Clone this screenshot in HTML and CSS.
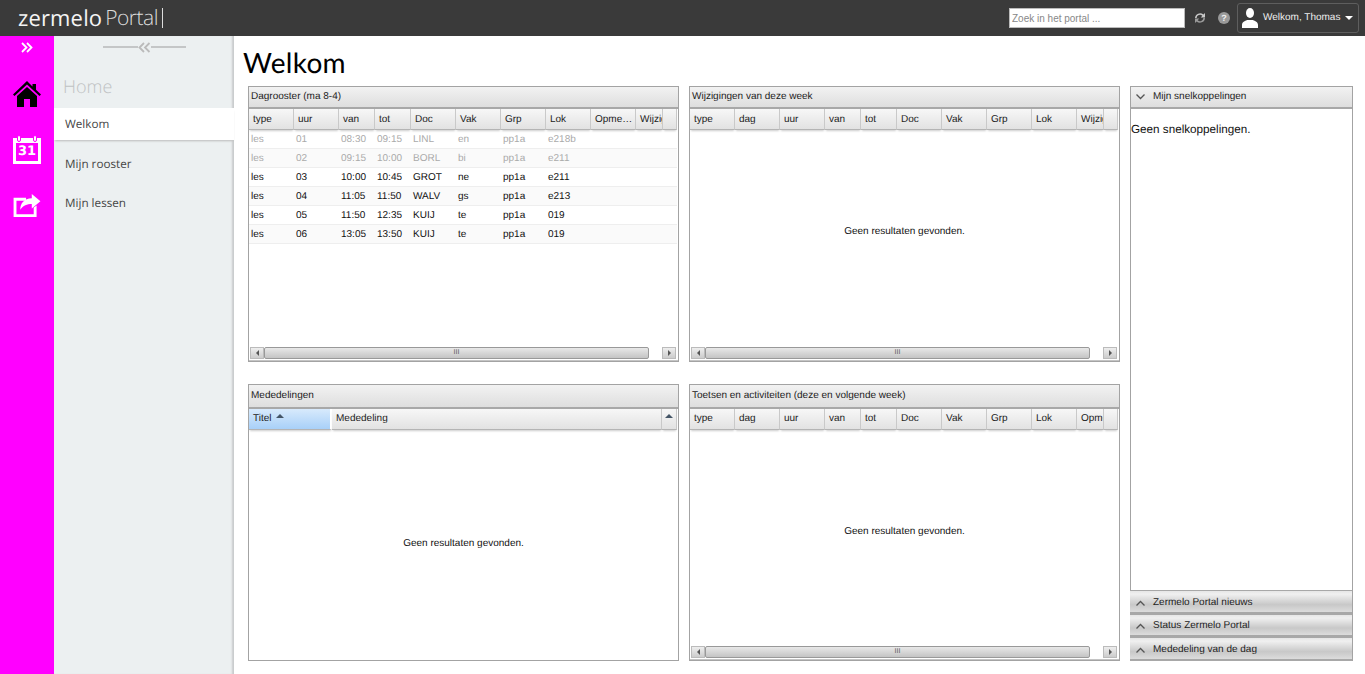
FILE: index.html
```html
<!DOCTYPE html>
<html lang="nl">
<head>
<meta charset="utf-8">
<title>Zermelo Portal</title>
<link rel="stylesheet" href="styles.css">
</head>
<body>
<header class="topbar">
  <div class="logo"><span class="logo-a">zermelo</span><span class="logo-b">Portal</span></div>
  <div class="top-tools">
    <input class="search" type="text" placeholder="Zoek in het portal ...">
    <svg class="refresh" width="14" height="14" viewBox="0 0 14 14"><path d="M2 7a5 5 0 0 1 8.400-3.400L12 2v4.400H7.800l1.500-1.600A3.400 3.400 0 0 0 3.600 7z" fill="#c8c8c8"/><path d="M12 7a5 5 0 0 1-8.400 3.400L2 12V7.600h4.200L4.700 9.200A3.400 3.400 0 0 0 10.400 7z" fill="#9a9a9a"/></svg>
    <span class="help">?</span>
    <div class="user">
      <svg width="16" height="20" viewBox="0 0 16 20"><ellipse cx="8" cy="5" rx="4" ry="5" fill="#fff"/><path d="M0 20v-3c0-3 3-4 5-5h6c2 1 5 2 5 5v3z" fill="#fff"/></svg>
      <span class="user-name">Welkom, Thomas</span>
      <span class="caret"></span>
    </div>
  </div>
</header>
<div class="shell">
  <nav class="rail">
    <svg class="rail-expand" width="12" height="11" viewBox="0 0 12 11"><path d="M1 1l4.500 4.500L1 10M6 1l4.500 4.500L6 10" fill="none" stroke="#fff" stroke-width="1.800"/></svg>
    <svg class="rail-icon" width="28" height="26" viewBox="0 0 28 26"><path d="M14 0L0 13.500l1.500 1.500L14 3.500 26.500 15l1.500-1.500-5-4.700V3h-3.500v2.500z" fill="#000"/><path d="M14 6L4 15v11h7v-8h6v8h7V15z" fill="#000"/></svg>
    <div class="cal">
      <span class="cal-ring cal-ring-l"></span><span class="cal-ring cal-ring-r"></span>
      <span class="cal-num">31</span>
    </div>
    <svg class="rail-icon share" width="28" height="23" viewBox="0 0 28 24"><path d="M0 4h13v3H3v14h18v-7l3-2v12H0z" fill="#fff"/><path d="M19 0l9 7.500-9 7.500v-4.500c-5 0-9 1.500-12 6 0-7 4-11.500 12-12z" fill="#fff"/></svg>
  </nav>
  <aside class="subnav">
    <div class="collapse">
      <span class="collapse-line"></span>
      <svg width="13" height="11" viewBox="0 0 13 11"><path d="M6 1L1.500 5.500 6 10M11.500 1L7 5.500l4.500 4.500" fill="none" stroke="#bbb" stroke-width="1.800"/></svg>
      <span class="collapse-line"></span>
    </div>
    <div class="sub-title">Home</div>
    <a class="sub-item sub-active">Welkom</a>
    <a class="sub-item">Mijn rooster</a>
    <a class="sub-item">Mijn lessen</a>
  </aside>
  <main class="main">
    <h1 class="title">Welkom</h1>
    <div class="board">
      <section class="panel">
        <h2 class="panel-head">Dagrooster (ma 8-4)</h2>
        <div class="grid-body">
          <table class="grid">
            <thead><tr><th class="m">type</th><th class="m">uur</th><th class="s">van</th><th class="s">tot</th><th class="m">Doc</th><th class="m">Vak</th><th class="m">Grp</th><th class="m">Lok</th><th class="m">Opme…</th><th class="c">Wijzig</th><th class="f"></th></tr></thead>
            <tbody>
              <tr class="past"><td>les</td><td>01</td><td>08:30</td><td>09:15</td><td>LINL</td><td>en</td><td>pp1a</td><td>e218b</td><td></td><td></td><td></td></tr>
              <tr class="past"><td>les</td><td>02</td><td>09:15</td><td>10:00</td><td>BORL</td><td>bi</td><td>pp1a</td><td>e211</td><td></td><td></td><td></td></tr>
              <tr><td>les</td><td>03</td><td>10:00</td><td>10:45</td><td>GROT</td><td>ne</td><td>pp1a</td><td>e211</td><td></td><td></td><td></td></tr>
              <tr><td>les</td><td>04</td><td>11:05</td><td>11:50</td><td>WALV</td><td>gs</td><td>pp1a</td><td>e213</td><td></td><td></td><td></td></tr>
              <tr><td>les</td><td>05</td><td>11:50</td><td>12:35</td><td>KUIJ</td><td>te</td><td>pp1a</td><td>019</td><td></td><td></td><td></td></tr>
              <tr><td>les</td><td>06</td><td>13:05</td><td>13:50</td><td>KUIJ</td><td>te</td><td>pp1a</td><td>019</td><td></td><td></td><td></td></tr>
            </tbody>
          </table>
        </div>
        <div class="hscroll"><span class="sb-btn"><i class="arrow-l"></i></span><span class="sb-thumb">III</span><span class="sb-gap"></span><span class="sb-btn"><i class="arrow-r"></i></span></div>
      </section>
      <section class="panel">
        <h2 class="panel-head">Wijzigingen van deze week</h2>
        <table class="grid">
          <thead><tr><th class="m">type</th><th class="m">dag</th><th class="m">uur</th><th class="s">van</th><th class="s">tot</th><th class="m">Doc</th><th class="m">Vak</th><th class="m">Grp</th><th class="m">Lok</th><th class="c">Wijzig</th><th class="f"></th></tr></thead>
        </table>
        <div class="empty empty-scroll">Geen resultaten gevonden.</div>
        <div class="hscroll"><span class="sb-btn"><i class="arrow-l"></i></span><span class="sb-thumb">III</span><span class="sb-gap"></span><span class="sb-btn"><i class="arrow-r"></i></span></div>
      </section>
      <section class="panel accordion">
        <h2 class="panel-head acc-open"><svg class="chev" width="9" height="6" viewBox="0 0 9 6"><path d="M.5.5l4 4 4-4" fill="none" stroke="#555" stroke-width="1.300"/></svg>Mijn snelkoppelingen</h2>
        <div class="acc-body">Geen snelkoppelingen.</div>
        <h2 class="acc-head acc-tall"><svg class="chev" width="9" height="6" viewBox="0 0 9 6"><path d="M.5 5.500l4-4 4 4" fill="none" stroke="#555" stroke-width="1.300"/></svg>Zermelo Portal nieuws</h2>
        <h2 class="acc-head"><svg class="chev" width="9" height="6" viewBox="0 0 9 6"><path d="M.5 5.500l4-4 4 4" fill="none" stroke="#555" stroke-width="1.300"/></svg>Status Zermelo Portal</h2>
        <h2 class="acc-head acc-tall"><svg class="chev" width="9" height="6" viewBox="0 0 9 6"><path d="M.5 5.500l4-4 4 4" fill="none" stroke="#555" stroke-width="1.300"/></svg>Mededeling van de dag</h2>
      </section>
      <section class="panel panel-low">
        <h2 class="panel-head">Mededelingen</h2>
        <table class="grid">
          <thead><tr><th class="titel">Titel <i class="sort"></i></th><th class="wide">Mededeling</th><th class="f f-sort"><i class="sort"></i></th></tr></thead>
        </table>
        <div class="empty empty-plain">Geen resultaten gevonden.</div>
      </section>
      <section class="panel panel-low">
        <h2 class="panel-head">Toetsen en activiteiten (deze en volgende week)</h2>
        <table class="grid">
          <thead><tr><th class="m">type</th><th class="m">dag</th><th class="m">uur</th><th class="s">van</th><th class="s">tot</th><th class="m">Doc</th><th class="m">Vak</th><th class="m">Grp</th><th class="m">Lok</th><th class="c">Opme</th><th class="f"></th></tr></thead>
        </table>
        <div class="empty empty-scroll">Geen resultaten gevonden.</div>
        <div class="hscroll"><span class="sb-btn"><i class="arrow-l"></i></span><span class="sb-thumb">III</span><span class="sb-gap"></span><span class="sb-btn"><i class="arrow-r"></i></span></div>
      </section>
    </div>
  </main>
</div>
</body>
</html>
```

FILE: styles.css
```css
* { box-sizing: border-box; }
html, body { margin: 0; height: 674px; overflow: hidden; background: #fff; }
body { font-family: "Liberation Sans", Arial, sans-serif; font-size: 10px; color: #111; display: flex; flex-direction: column; text-rendering: geometricPrecision; }

.topbar { height: 36px; flex: none; background: #3a3a3a; display: flex; justify-content: space-between; align-items: center; padding: 0 6px 0 18px; }
.logo { font-family: "Open Sans", sans-serif; font-size: 22px; line-height: 20px; height: 20px; display: flex; color: #f4f4f4; padding-right: 4px; border-right: 1px solid #ddd; }
.logo-a { font-weight: 400; letter-spacing: .15px; }
.logo-b { font-weight: 300; color: #ddd; margin-left: 3px; font-size: 21px; letter-spacing: -.5px; }
.top-tools { display: flex; align-items: center; }
.search { width: 176px; height: 20px; border: 1px solid #bbb; padding: 0 2px; font: 10px "Liberation Sans", sans-serif; background: #fff; margin-right: 8px; }
.search::placeholder { color: #888; opacity: 1; }
.refresh { margin-right: 11px; }
.help { width: 12px; height: 12px; border-radius: 50%; background: #999; color: #eee; font-size: 9px; font-weight: 700; line-height: 12px; text-align: center; margin-right: 7px; }
.user { width: 122px; height: 30px; border: 1px solid #5e5e5e; border-radius: 3px; display: flex; align-items: center; padding-left: 4px; color: #eee; }
.user-name { margin-left: 5px; white-space: nowrap; position: relative; top: -1px; }
.caret { width: 0; height: 0; border: 4px solid transparent; border-top-color: #fff; border-bottom: 0; margin-left: 5px; }

.shell { flex: 1; display: flex; min-height: 0; }
.rail { width: 54px; flex: none; background: #f0f; display: flex; flex-direction: column; align-items: center; padding-top: 6px; }
.rail-expand { margin-bottom: 28px; }
.rail-icon { display: block; flex: none; }
.cal { position: relative; width: 28px; height: 26px; flex: none; margin-top: 31px; background: #fff; padding: 5px 3px 3px; display: flex; }
.cal-ring { position: absolute; top: -3px; width: 4px; height: 7px; border-radius: 2px; background: #fff; border: 1px solid #f0f; }
.cal-ring-l { left: 4px; }
.cal-ring-r { right: 4px; }
.cal-num { flex: 1; background: #f0f; color: #fff; font: 700 13px/18px "DejaVu Sans", sans-serif; text-align: center; }
.share { margin-top: 30px; }

.subnav { width: 180px; flex: none; background: #ecf0f1; box-shadow: inset -3px 0 2px -1px #c9cbcc; display: flex; flex-direction: column; font-family: "Open Sans", sans-serif; }
.collapse { height: 22px; display: flex; align-items: center; justify-content: center; }
.collapse-line { width: 35px; height: 2px; background: #c4c6c7; }
.sub-title { height: 50px; padding: 17px 0 0 9px; font-size: 18px; line-height: 24px; font-weight: 300; color: #bfc2c3; }
.sub-item { height: 39px; padding: 9px 0 0 11px; font-size: 11.700px; line-height: 18px; color: #444; }
.sub-active { height: 32px; padding-top: 7px; background: #fff; box-shadow: 0 2px 2px -1px #bbb; margin-bottom: 6px; }

.main { flex: 1; min-width: 0; }
.title { margin: 0; height: 50px; padding: 8px 0 0 9px; font: 400 28px/36px Lato, sans-serif; letter-spacing: .3px; color: #000; }
.board { display: grid; grid-template-columns: 431px 431px 223px; grid-template-rows: 276px 277px; gap: 22px 10px; margin-left: 14px; }
.panel { border: 1px solid #a3a3a3; display: flex; flex-direction: column; min-height: 0; }
.panel-head { margin: 0; height: 22px; flex: none; padding-left: 2px; font: 400 10px/20px "Liberation Sans", sans-serif; color: #222; background: linear-gradient(#f2f2f2, #dedede); border-bottom: 2px solid #a8a8a8; }
.panel-low .panel-head { height: 24px; line-height: 21px; }
.panel-low .grid th { padding-bottom: 2px; }

.grid { table-layout: fixed; border-collapse: separate; border-spacing: 0; width: 428px; }
.grid-body { flex: 1; min-height: 0; }
.grid th { height: 21px; padding: 0 0 0 4px; font-weight: 400; font-size: 10px; text-align: left; white-space: nowrap; overflow: hidden; color: #222; background: linear-gradient(#f7f7f7, #e2e2e2); border-right: 1px solid #c9c9c9; border-bottom: 1px solid #b4b4b4; box-shadow: 0 2px 2px -1px #ccc; }
.grid .m { width: 45px; }
.grid .s { width: 36px; }
.grid .c { width: 27px; }
.grid .titel { width: 83px; background: linear-gradient(#d8eafc, #a8d0f8); border-right: 2px solid #fff; }
.grid .wide { width: 330px; }
.grid .f-sort { padding: 0 0 2px; text-align: center; }
.grid td { height: 19px; padding: 1px 0 0 2px; white-space: nowrap; border-bottom: 1px solid #eee; overflow: hidden; }
.grid tbody tr:nth-child(even) { background: #fafafa; }
.grid .past td { color: #aaa; }
.sort { display: inline-block; width: 0; height: 0; border: 4px solid transparent; border-top: 0; border-bottom: 4px solid #456; vertical-align: 3px; margin-left: 2px; }
.f-sort .sort { margin-left: 0; }

.empty { flex: 1; min-height: 0; display: flex; align-items: center; justify-content: center; }
.empty-scroll { padding-bottom: 13px; }
.empty-plain { padding-bottom: 4px; }

.hscroll { height: 15px; flex: none; display: flex; align-items: center; padding: 0 2px 0 1px; border-bottom: 1px solid #c4c4c4; }
.sb-btn { width: 14px; height: 12px; flex: none; background: linear-gradient(#eee, #ccc); border: 1px solid #bbb; display: flex; align-items: center; justify-content: center; }
.sb-thumb { width: 385px; height: 12px; flex: none; background: linear-gradient(#e8e8e8, #c4c4c4); border: 1px solid #999; border-radius: 2px; text-align: center; font-size: 7px; line-height: 10px; color: #555; }
.sb-gap { flex: 1; }
.arrow-l, .arrow-r { display: block; width: 0; height: 0; border: 3px solid transparent; }
.arrow-l { border-left: 0; border-right-color: #555; }
.arrow-r { border-right: 0; border-left-color: #555; }

.accordion { grid-row: 1 / span 2; grid-column: 3; border-left: 0; border-top: 0; border-bottom: 0; height: 575px; }
.accordion .panel-head { padding-left: 5px; border-top: 1px solid #a3a3a3; height: 23px; display: flex; align-items: center; border-left: 1px solid #a3a3a3; }
.chev { margin-right: 8px; flex: none; }
.acc-body { height: 481px; flex: none; border-left: 1px solid #a3a3a3; padding: 13px 0 0; font-size: 11.700px; line-height: 15px; color: #111; }
.acc-head { margin: 0; height: 23px; flex: none; padding: 2px 0 0 6px; display: flex; align-items: center; font: 400 10px/18px "Liberation Sans", sans-serif; color: #222; background: linear-gradient(#e6e6e6, #f0f0f0 15%, #c8c8c8 65%, #dcdcdc); border-top: 1px solid #a8a8a8; border-bottom: 2px solid #a8a8a8; }
.acc-tall { height: 24px; }
```
